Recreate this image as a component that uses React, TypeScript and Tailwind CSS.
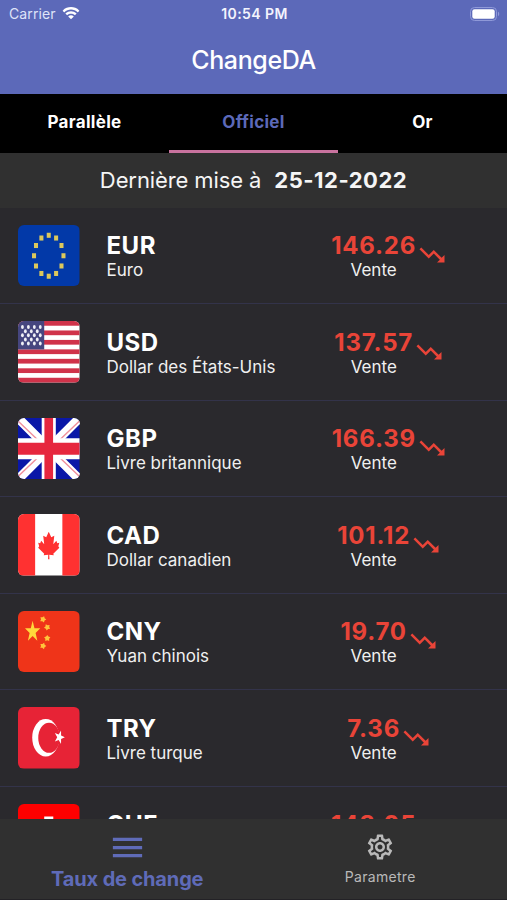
import React, { useState } from 'react';
import { MdMenu, MdOutlineSettings, MdTrendingDown } from 'react-icons/md';

interface Rate {
  code: string;
  name: string;
  value: string;
  flag: React.ReactNode;
}

const star = (cx: number, cy: number, r: number, rot = 0, inner = 0.39) =>
  Array.from({ length: 10 }, (_, i) => {
    const a = ((i * 36 - 90 + rot) * Math.PI) / 180;
    const d = i % 2 === 0 ? r : r * inner;
    return `${(cx + d * Math.cos(a)).toFixed(2)},${(cy + d * Math.sin(a)).toFixed(2)}`;
  }).join(' ');

const Flag: React.FC<{ children: React.ReactNode }> = ({ children }) => (
  <svg viewBox="0 0 61 61" className="h-[61.5px] w-[61.5px] shrink-0 rounded-[6px]">
    {children}
  </svg>
);

const FlagEU = () => (
  <Flag>
    <rect width="61" height="61" fill="#0239a8" />
    {Array.from({ length: 12 }, (_, i) => {
      const a = (i * 30 * Math.PI) / 180;
      return (
        <rect key={i} x={30.5 + 14.6 * Math.sin(a) - 2} y={30.5 - 20.3 * Math.cos(a) - 2.5} width="4" height="5" fill="#dcc85c" />
      );
    })}
  </Flag>
);

const FlagUS = () => (
  <Flag>
    <rect width="61" height="61" fill="#fff" />
    {[0, 2, 4, 6, 8, 10, 12].map((n) => (
      <rect key={n} y={(n * 61) / 13} width="61" height={61 / 13} fill="#d0334a" />
    ))}
    <rect width="26" height="28.2" fill="#46467f" />
    {[0, 1, 2, 3, 4].map((r) =>
      (r % 2 ? [0, 1, 2] : [0, 1, 2, 3]).map((c) => (
        <ellipse key={`${r}-${c}`} cx={(r % 2 ? 7.3 : 4.4) + c * 5.9} cy={6 + r * 4.1} rx="1.4" ry="2" fill="#f0f0f6" />
      ))
    )}
  </Flag>
);

const FlagGB = () => (
  <Flag>
    <rect width="61" height="61" fill="#0a17a7" />
    <path d="M0 0L61 61M61 0L0 61" stroke="#fff" strokeWidth="9" />
    <path d="M0 3L20 22M61 3L41 22M61 58L41 39M0 58L20 39" stroke="#f0909b" strokeWidth="1.4" />
    <path d="M30.5 0V61" stroke="#fff" strokeWidth="14" />
    <path d="M0 30.5H61" stroke="#fff" strokeWidth="21" />
    <path d="M30.5 0V61" stroke="#e6273e" strokeWidth="8.6" />
    <path d="M0 30.5H61" stroke="#e6273e" strokeWidth="12" />
  </Flag>
);

const FlagCA = () => (
  <Flag>
    <rect width="61" height="61" fill="#fff" />
    <rect width="17" height="61" fill="#ff3131" />
    <rect x="44" width="17" height="61" fill="#ff3131" />
    <path
      d="M30.5 17.5L33 23L36 21.5L35 30L38 26.5L39 29L41 28.5L40 32L41 33.5L35 39.5L35.5 41L31 40.5L31.2 45H29.8L30 40.5L25.5 41L26 39.5L20 33.5L21 32L20 28.5L22 29L23 26.5L26 30L25 21.5L28 23Z"
      fill="#ff3131"
    />
  </Flag>
);

const FlagCN = () => (
  <Flag>
    <rect width="61" height="61" fill="#ef3419" />
    <polygon points={star(0, 0, 8.4)} fill="#ffd83b" transform="translate(14.5 20.6) scale(0.95 1.3)" />
    <polygon points={star(24.8, 8.2, 3.3, 20, 0.6)} fill="#ffc43b" />
    <polygon points={star(29, 16.2, 3.3, 45, 0.6)} fill="#ffc43b" />
    <polygon points={star(29, 27, 3.3, 0, 0.6)} fill="#ffc43b" />
    <polygon points={star(24.8, 34.7, 3.3, 20, 0.6)} fill="#ffc43b" />
  </Flag>
);

const FlagTR = () => (
  <Flag>
    <rect width="61" height="61" fill="#e72336" />
    <ellipse cx="27.5" cy="30.5" rx="13.4" ry="18.6" fill="#fff" />
    <ellipse cx="30.8" cy="30.5" rx="10.7" ry="15" fill="#e72336" />
    <polygon points={star(0, 0, 6.2, 18)} fill="#fff" transform="translate(41 30) scale(0.88 1.15)" />
  </Flag>
);

const FlagCH = () => (
  <Flag>
    <rect width="61" height="61" fill="#fe0000" />
    <path d="M26 12.5H35V26H48.5V35H35V48.5H26V35H12.5V26H26Z" fill="#fff" />
  </Flag>
);

const rates: Rate[] = [
  { code: 'EUR', name: 'Euro', value: '146.26', flag: <FlagEU /> },
  { code: 'USD', name: 'Dollar des États-Unis', value: '137.57', flag: <FlagUS /> },
  { code: 'GBP', name: 'Livre britannique', value: '166.39', flag: <FlagGB /> },
  { code: 'CAD', name: 'Dollar canadien', value: '101.12', flag: <FlagCA /> },
  { code: 'CNY', name: 'Yuan chinois', value: '19.70', flag: <FlagCN /> },
  { code: 'TRY', name: 'Livre turque', value: '7.36', flag: <FlagTR /> },
  { code: 'CHF', name: 'Franc suisse', value: '148.05', flag: <FlagCH /> },
];

const tabs = ['Parallèle', 'Officiel', 'Or'];

const StatusBar = () => (
  <div className="grid h-7 grid-cols-3 items-center pl-[9px] pr-[7px] text-[14px] leading-none">
    <div className="flex items-center gap-[6px] text-[#dfe3f8]">
      <span className="tracking-[0.1px]">Carrier</span>
      <svg viewBox="0 0 18 14" className="h-[14px] w-[18px]" fill="#fff">
        <path d="M9 2.6c2.5 0 4.8 1 6.5 2.6.1.1.3.1.4 0L17.2 3.9c.1-.1.1-.3 0-.5C12.6-1 5.4-1 .8 3.4c-.1.2-.1.4 0 .5L2.1 5.2c.1.1.3.1.4 0C4.2 3.6 6.5 2.6 9 2.6z" />
        <path d="M9 6.7c1.4 0 2.7.5 3.7 1.4.1.1.3.1.4 0l1.3-1.3c.1-.1.1-.3 0-.5-3-2.8-7.8-2.8-10.8 0-.1.2-.1.4 0 .5l1.3 1.3c.1.1.3.1.4 0C6.3 7.2 7.6 6.7 9 6.7z" />
        <path d="M11.6 9.7c.1-.1.1-.3 0-.4-1.5-1.3-3.7-1.3-5.2 0-.1.1-.1.3 0 .4l2.4 2.4c.1.1.3.1.4 0z" />
      </svg>
    </div>
    <div className="text-center font-semibold tracking-[0.4px] text-[#f3f4fd]">10:54 PM</div>
    <div className="flex justify-end">
      <svg viewBox="0 0 30 14" className="h-[14px] w-[30px]">
        <rect x="0.5" y="0.5" width="26" height="13" rx="4" fill="none" stroke="#8f99d8" />
        <rect x="2.3" y="2.3" width="22.4" height="9.4" rx="2.2" fill="#fff" />
        <path d="M28 4.8c1.6.6 1.6 3.8 0 4.4z" fill="#8f99d8" />
      </svg>
    </div>
  </div>
);

const RateRow: React.FC<{ rate: Rate }> = ({ rate }) => (
  <div className="flex h-[96.5px] shrink-0 items-center border-b border-[#33334a] pl-[18px]">
    {rate.flag}
    <div className="ml-[27px] w-[134px] whitespace-nowrap pt-[4px]">
      <div className="text-[24px] font-bold leading-[26px] tracking-[0.5px] text-white">{rate.code}</div>
      <div className="text-[17px] leading-[22px] text-[#f0f0f0]">{rate.name}</div>
    </div>
    <div className="flex w-[267px] items-center justify-center">
      {/* same width as the icon, keeps the price centred */}
      <span className="w-[31px]" />
      <div className="flex flex-col items-center pt-[4px]">
        <div className="text-[24px] font-bold leading-[26px] tracking-[0.8px] text-[#e94438]">{rate.value}</div>
        <div className="text-[17px] leading-[22px] text-[#f0f0f0]">Vente</div>
      </div>
      <MdTrendingDown className="ml-[1px] h-[30px] w-[30px] text-[#e94438]" />
    </div>
  </div>
);

const App: React.FC = () => {
  const [activeTab, setActiveTab] = useState('Officiel');

  return (
    <div className="flex h-[900px] w-[507px] flex-col overflow-hidden bg-[#2a292d] font-['Inter',sans-serif]">
      <header className="h-[94px] shrink-0 bg-[#5c69b9] text-white">
        <StatusBar />
        <h1 className="mt-[14px] text-center text-[25px] font-medium leading-9 tracking-[-0.4px]">ChangeDA</h1>
      </header>

      <div className="grid h-[58.5px] shrink-0 grid-cols-3 bg-black">
        {tabs.map((t) => (
          <button
            key={t}
            onClick={() => setActiveTab(t)}
            className={`border-b-[3px] pt-[1px] text-[17px] font-bold tracking-[0.3px] ${
              t === activeTab ? 'border-[#c9739f] text-[#5c69b9]' : 'border-transparent text-white'
            }`}
          >
            {t}
          </button>
        ))}
      </div>

      <div className="flex h-[55px] shrink-0 items-center justify-center gap-[13px] bg-[#303030] pt-[1px] text-[22px] text-[#f5f5f5]">
        <span className="tracking-[-0.1px]">Dernière mise à</span>
        <span className="font-bold tracking-[0.5px]">25-12-2022</span>
      </div>

      <main className="flex min-h-0 flex-1 flex-col overflow-hidden">
        {rates.map((r) => (
          <RateRow key={r.code} rate={r} />
        ))}
      </main>

      <nav className="grid h-[81.5px] shrink-0 grid-cols-2 border-b border-[#232226] bg-[#303030]">
        <button className="flex flex-col items-center pl-[1px] text-[#5f6bb8]">
          <MdMenu className="mt-[9px] h-[39px] w-[39px]" />
          <span className="text-[20px] font-bold leading-6 tracking-[-0.15px]">Taux de change</span>
        </button>
        <button className="flex flex-col items-center text-[#b9b9b9]">
          <MdOutlineSettings className="mt-[13px] h-[30px] w-[30px]" />
          <span className="mt-[5px] text-[14px] leading-5 tracking-[0.3px]">Parametre</span>
        </button>
      </nav>
    </div>
  );
};

export default App;
